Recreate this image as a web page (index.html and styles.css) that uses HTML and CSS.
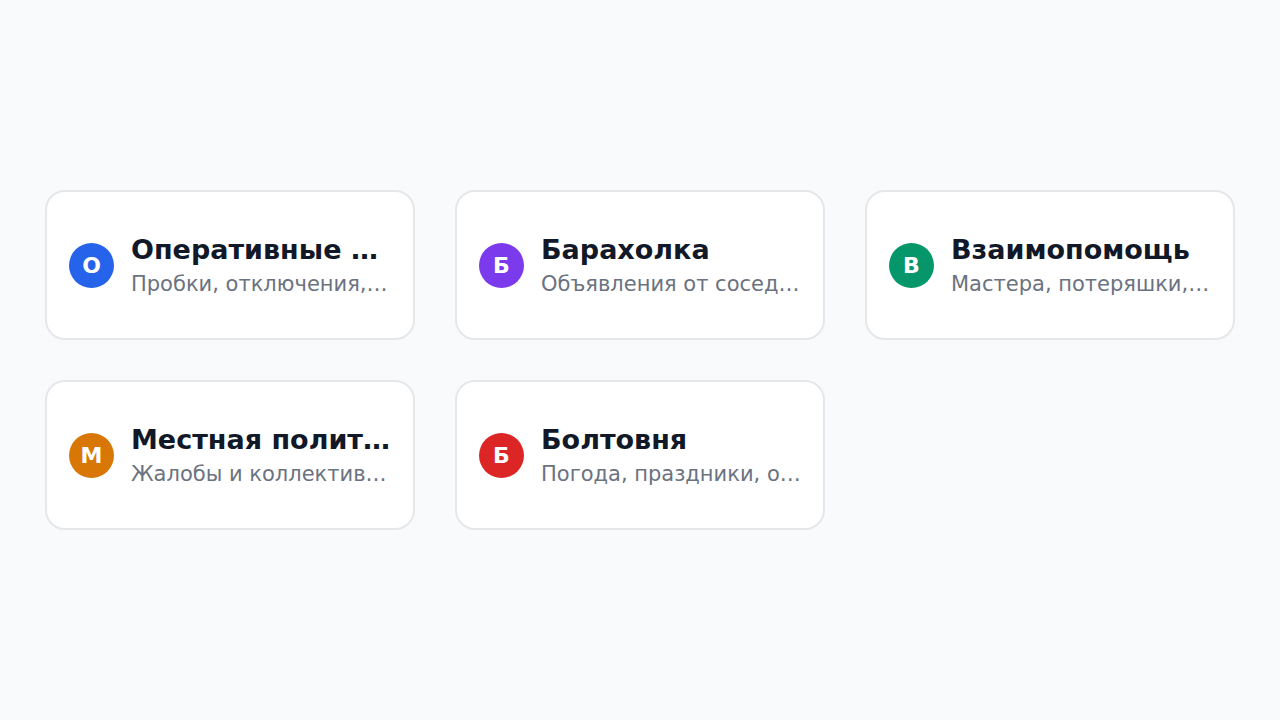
FILE: index.html
```html
<!DOCTYPE html>
<html lang="ru">
<head>
    <meta charset="UTF-8">
    <title>Каналы района</title>
    <link rel="stylesheet" href="styles.css">
</head>
<body>
    <main class="channels">
        <a class="channel" href="#">
            <span class="avatar blue">О</span>
            <span class="info">
                <span class="title">Оперативные новости</span>
                <span class="desc">Пробки, отключения, аварии и срочные сообщения</span>
            </span>
        </a>
        <a class="channel" href="#">
            <span class="avatar purple">Б</span>
            <span class="info">
                <span class="title">Барахолка</span>
                <span class="desc">Объявления от соседей: продам, отдам, куплю</span>
            </span>
        </a>
        <a class="channel" href="#">
            <span class="avatar green">В</span>
            <span class="info">
                <span class="title">Взаимопомощь</span>
                <span class="desc">Мастера, потеряшки, просьбы о помощи</span>
            </span>
        </a>
        <a class="channel" href="#">
            <span class="avatar orange">М</span>
            <span class="info">
                <span class="title">Местная политика</span>
                <span class="desc">Жалобы и коллективные обращения</span>
            </span>
        </a>
        <a class="channel" href="#">
            <span class="avatar red">Б</span>
            <span class="info">
                <span class="title">Болтовня</span>
                <span class="desc">Погода, праздники, о чём угодно</span>
            </span>
        </a>
    </main>
</body>
</html>
```

FILE: styles.css
```css
body {
    margin: 0;
    background-color: #f9fafb;
    font-family: "DejaVu Sans", sans-serif;
}

.channels {
    min-height: 100vh;
    box-sizing: border-box;
    padding: 0 45px;
    display: grid;
    grid-template-columns: repeat(3, minmax(0, 1fr));
    align-content: center;
    gap: 40px;
}

.channel {
    min-width: 0;
    height: 150px;
    box-sizing: border-box;
    padding: 0 21px 0 22px;
    display: flex;
    align-items: center;
    gap: 17px;
    background-color: white;
    border: 2px solid #e5e7eb;
    border-radius: 20px;
    text-decoration: none;
}

.avatar {
    flex: none;
    width: 45px;
    height: 45px;
    border-radius: 50%;
    display: flex;
    align-items: center;
    justify-content: center;
    color: white;
    font-size: 22px;
    font-weight: bold;
}

.blue { background-color: #2563eb; }
.purple { background-color: #7c3aed; }
.green { background-color: #059669; }
.orange { background-color: #d97706; }
.red { background-color: #dc2626; }

.info {
    min-width: 0;
    flex: 1;
    display: flex;
    flex-direction: column;
    gap: 5px;
}

.title,
.desc {
    white-space: nowrap;
    overflow: hidden;
    text-overflow: ellipsis;
}

.title {
    font-size: 27px;
    font-weight: bold;
    line-height: 32px;
    color: #111827;
}

.desc {
    font-size: 21px;
    line-height: 26px;
    color: #6b7280;
}
```
